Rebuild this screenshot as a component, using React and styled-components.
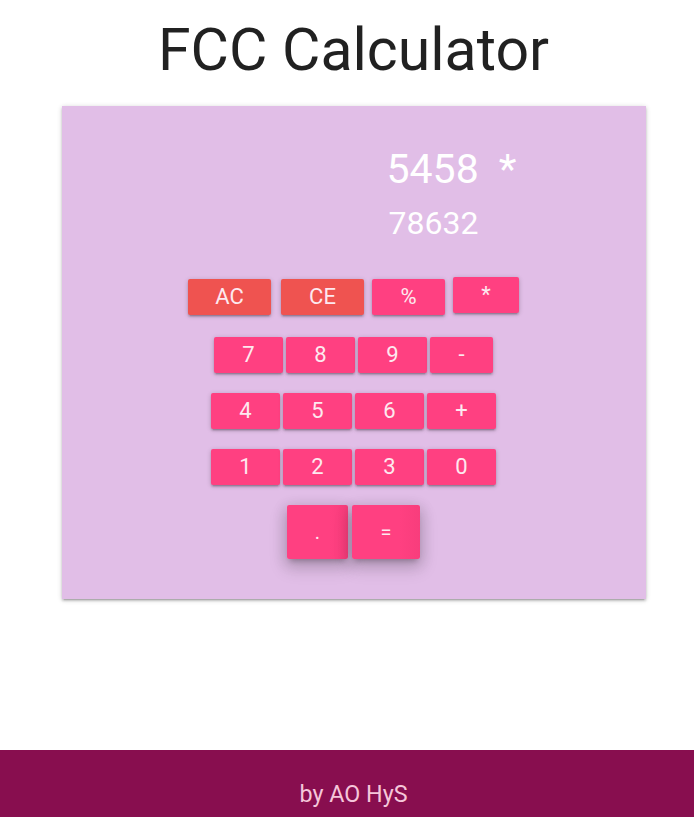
import React from "react";
import styled, { createGlobalStyle, css } from "styled-components";

const Global = createGlobalStyle`
  html, body { margin: 0; padding: 0; background: #fff; }
  body { font-family: Roboto, "Noto Sans", sans-serif; }
  * { box-sizing: border-box; }
`;

const Page = styled.div`
  min-height: 100vh;
  display: flex;
  flex-direction: column;
`;

const Main = styled.main`
  flex: 1;
  display: flex;
  flex-direction: column;
  align-items: center;
  padding-left: 13px;
`;

const Title = styled.h1`
  margin: 16.5px 0 0;
  font-size: 59px;
  line-height: 66px;
  font-weight: 400;
  color: rgba(0, 0, 0, 0.87);
  text-align: center;
`;

const Card = styled.section`
  margin-top: 23.5px;
  width: 584px;
  background: #e1bee7;
  padding: 39px 0 40px;
  box-shadow: 0 2px 2px 0 rgba(0, 0, 0, 0.14), 0 3px 1px -2px rgba(0, 0, 0, 0.12),
    0 1px 5px 0 rgba(0, 0, 0, 0.2);
`;

const Display = styled.div`
  padding-left: 325px;
  color: #fff;
`;

const Operation = styled.div`
  font-size: 41px;
  line-height: 48px;
  height: 48px;
  white-space: nowrap;
`;

const Operator = styled.span`
  margin-left: 20px;
`;

const Current = styled.div`
  margin: 12px 0 0 2px;
  font-size: 32px;
  line-height: 36px;
  height: 36px;
`;

const Keypad = styled.div`
  margin-top: 36px;
  display: flex;
  flex-direction: column;
  gap: 20px;
`;

const Row = styled.div`
  display: flex;
  justify-content: center;
  align-items: flex-start;
  gap: ${(p) => p.$gap}px;
  height: ${(p) => p.$h}px;
  margin-bottom: ${(p) => p.$extra || 0}px;
`;

const Key = styled.button`
  border: none;
  border-radius: 2px;
  padding: 0;
  margin-top: ${(p) => (p.$drop ? 2 : 0)}px;
  margin-left: ${(p) => p.$ml || 0}px;
  width: ${(p) => p.$w}px;
  height: 36px;
  line-height: 36px;
  font-family: Roboto, "Noto Sans", sans-serif;
  font-size: 22px;
  color: #fde9ef;
  text-align: center;
  text-transform: uppercase;
  cursor: pointer;
  background: ${(p) => (p.$danger ? "#ef5350" : "#ff4081")};
  box-shadow: 0 2px 2px 0 rgba(0, 0, 0, 0.14), 0 3px 1px -2px rgba(0, 0, 0, 0.12),
    0 1px 5px 0 rgba(0, 0, 0, 0.2);
  ${(p) =>
    p.$large &&
    css`
      height: 54px;
      line-height: 54px;
      font-size: 20px;
      background: linear-gradient(90deg, #ff4081 70%, #f83d7c 100%);
      box-shadow: 0 8px 17px 2px rgba(0, 0, 0, 0.14), 0 3px 14px 2px rgba(0, 0, 0, 0.12),
        0 5px 5px -3px rgba(0, 0, 0, 0.2);
    `}
`;

const Footer = styled.footer`
  height: 67px;
  background: #880e4f;
  display: flex;
  align-items: center;
  justify-content: center;
  padding: 20px 0 0 13px;
  color: #f5c6da;
  font-size: 23.3px;
`;

const rows = [
  {
    gap: 0,
    h: 38,
    extra: 2,
    keys: [
      { label: "AC", w: 83, danger: true, drop: true, ml: 0 },
      { label: "CE", w: 83, danger: true, drop: true, ml: 10 },
      { label: "%", w: 73, drop: true, ml: 8 },
      { label: "*", w: 66, ml: 8 },
    ],
  },
  {
    gap: 3,
    h: 36,
    keys: [
      { label: "7", w: 69 },
      { label: "8", w: 69 },
      { label: "9", w: 69 },
      { label: "-", w: 63 },
    ],
  },
  {
    gap: 3,
    h: 36,
    keys: [
      { label: "4", w: 69 },
      { label: "5", w: 69 },
      { label: "6", w: 69 },
      { label: "+", w: 69 },
    ],
  },
  {
    gap: 3,
    h: 36,
    keys: [
      { label: "1", w: 69 },
      { label: "2", w: 69 },
      { label: "3", w: 69 },
      { label: "0", w: 69 },
    ],
  },
  {
    gap: 4,
    h: 54,
    keys: [
      { label: ".", w: 61, large: true },
      { label: "=", w: 68, large: true },
    ],
  },
];

export default function App() {
  return (
    <Page>
      <Global />
      <Main>
        <Title>FCC Calculator</Title>
        <Card>
          <Display>
            <Operation>
              5458<Operator>*</Operator>
            </Operation>
            <Current>78632</Current>
          </Display>
          <Keypad>
            {rows.map((r, i) => (
              <Row key={i} $gap={r.gap} $h={r.h} $extra={r.extra}>
                {r.keys.map((k) => (
                  <Key
                    key={k.label}
                    $w={k.w}
                    $danger={k.danger}
                    $drop={k.drop}
                    $ml={k.ml}
                    $large={k.large}
                  >
                    {k.label}
                  </Key>
                ))}
              </Row>
            ))}
          </Keypad>
        </Card>
      </Main>
      <Footer>by AO HyS</Footer>
    </Page>
  );
}
